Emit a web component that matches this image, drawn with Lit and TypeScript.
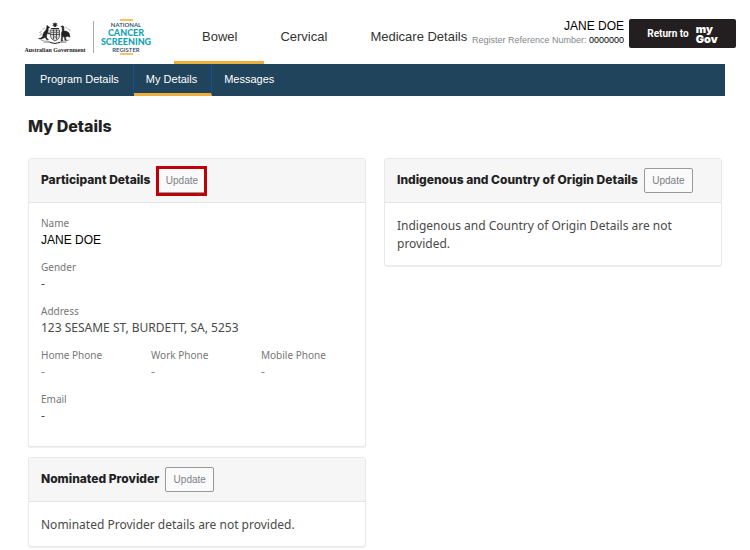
import { LitElement, html, css, svg, nothing } from "lit";
import { customElement, property } from "lit/decorators.js";
import { classMap } from "lit/directives/class-map.js";

const crest = svg`
  <g fill="none" stroke="#222" stroke-linecap="round" stroke-linejoin="round">
    <path fill="#222" stroke="none" d="M17 0l.7 1.6 1.7-.5-.9 1.5 1.4 1-1.8.2.1 1.7L17 4.400l-1.200 1.100.1-1.700-1.800-.2 1.400-1-.9-1.500 1.700.5z"/>
    <path stroke-width="1.200" d="M13.500 6.500h7"/>
    <path fill="#ddd" stroke-width=".7" d="M12.500 8h9v6c0 2.500-2.500 4-4.500 5-2-1-4.500-2.500-4.500-5z"/>
    <path stroke-width=".7" d="M12.500 12.500h9M15.500 8v9M18.500 8v9M13.500 10.300h1M16.500 10.300h1M19.500 10.300h1M16.500 15h1"/>
    <path fill="#222" stroke-width=".5" d="M9.500 3.500l1 1.200 1.400.8-1.700.7c.2 1.700.1 2.900-.6 4.300l2.200.8-.2.700-2.500-.4c-.5 2-.8 3.200-.2 4.500l1.600 1.700H8.700l-1.600-2.500-2.300 1.200c-1.800.7-3 .7-4.300 0 1.800-.1 3.300-.8 4.100-2.300.4-3 1.800-4.700 3.300-6.200.7-1.200.9-2.700 1-4z"/>
    <path fill="#222" stroke-width=".5" d="M23 4.500l1.700-.7 1 .8c.5 1.500 0 3.200.3 4.500 2.800-.4 5.200 1.200 5.700 4l.3 2.200-2-1-2.700.6.700 2.500 1 1h-2l-.7-3.300-1.500-.7-.5 3.500.5 1h-1.700l.5-4.600c-.8-2.300.1-4 .7-5.600-.2-1.200-.1-2.300-.1-3.500z"/>
    <path stroke="#777" stroke-width=".7" d="M3 18c3 2 6 .5 9 1.700M31 18c-3 2-6 .5-9 1.700M6 20.500c3-1 5 .5 7 .2M28 20.500c-3-1-5 .5-7 .2M1.500 11l2-2M2 13.500l1.500-2M32 9l-1.500-2M5 7.500L6.500 6M29 6.500L27.500 5"/>
    <path stroke-width="1" d="M12.500 20.500l4.500 1 4.500-1"/>
  </g>`;

const sheet = css`
  * { box-sizing: border-box; }
  h1, h2, p, dl, dd, dt { margin: 0; }
  a { color: inherit; text-decoration: none; }
`;

@customElement("detail-card")
class DetailCard extends LitElement {
  @property() heading = "";
  @property({ type: Boolean }) marked = false;

  static styles = [sheet, css`
    :host { display: block; }
    .card {
      border: 1px solid #e9e9e9;
      border-radius: 3px;
      box-shadow: 0 1px 1px #eee;
      background: #fff;
    }
    .head {
      display: flex;
      align-items: center;
      gap: 6px;
      height: 44px;
      padding: 0 12px;
      background: #f6f6f6;
      border-bottom: 1px solid #e4e4e4;
    }
    h2 {
      font: 800 12px/18px Inter, "Liberation Sans", sans-serif;
      padding-bottom: 2px;
      color: #222;
      white-space: nowrap;
    }
    button {
      flex: none;
      width: 49px;
      height: 25px;
      padding: 0;
      border: 1px solid #96999d;
      border-radius: 2px;
      background: #fafafa;
      color: #7c8086;
      font: 10px/14px "Liberation Sans", Arial, sans-serif;
    }
    .marked {
      width: 51px;
      height: 30px;
      border: 3px solid #c00008;
      border-radius: 0;
      box-shadow: inset 0 -1px #96999d;
    }
    .body { padding: 13px 12px 10px; }
  `];

  render() {
    return html`
      <section class="card">
        <div class="head">
          <h2>${this.heading}</h2>
          <button type="button" class=${classMap({ marked: this.marked })} aria-label="Update ${this.heading}">Update</button>
        </div>
        <div class="body"><slot></slot></div>
      </section>`;
  }
}

@customElement("app-root")
class AppRoot extends LitElement {
  static styles = [sheet, css`
    :host {
      display: block;
      background: #fff;
      color: #4a4a4a;
      font: 12px/18px "Noto Sans", "Open Sans", sans-serif;
    }
    .top {
      display: flex;
      height: 64px;
      padding: 0 14px 0 25px;
      font-family: "Liberation Sans", Arial, sans-serif;
    }
    .brand { display: flex; width: 149px; padding-top: 19px; flex: none; }
    .gov {
      display: flex;
      flex-direction: column;
      align-items: center;
      width: 60px;
      padding-top: 3px;
      font: bold 6px/8px "Liberation Serif", serif;
      color: #222;
      white-space: nowrap;
    }
    .gov svg { display: block; margin-bottom: 2px; }
    .rule { width: 1px; height: 32px; margin: 2px 7px 0 8px; background: #aaa; }
    .ncsr {
      display: flex;
      flex-direction: column;
      align-items: center;
      width: 50px;
      height: 36px;
      padding: 2px 0;
      font: 600 6px/7px Lato, sans-serif;
      color: #1c4660;
      background:
        linear-gradient(#f5c26b, #f5c26b) top / 13px 2px no-repeat,
        linear-gradient(#f5c26b, #f5c26b) bottom / 13px 2px no-repeat;
    }
    .ncsr b { font-weight: 900; font-size: 9px; line-height: 9px; color: #16a3b4; }
    .tabs { display: flex; flex: none; }
    .tabs a {
      display: flex;
      align-items: center;
      padding: 12px 27px 0 16px;
      border-bottom: 3px solid transparent;
      font-size: 13px;
      line-height: 16px;
      color: #333;
      white-space: nowrap;
    }
    .tabs a:first-child { padding-left: 28px; }
    .tabs a:last-child { padding-right: 0; }
    .tabs .on { border-color: #edae3c; }
    .who {
      margin-left: auto;
      padding-top: 19px;
      font-size: 9px;
      line-height: 14px;
      text-align: right;
      color: #000;
      white-space: nowrap;
    }
    .who strong { display: block; font-weight: 400; font-size: 12px; }
    .who span { color: #84878b; }
    .back {
      display: flex;
      align-items: center;
      justify-content: center;
      gap: 7px;
      flex: none;
      width: 107px;
      height: 29px;
      margin: 19px 0 0 5px;
      padding: 0;
      border: 0;
      border-radius: 2px;
      background: #231f20;
      color: #fff;
      font: 700 10px/14px Roboto, sans-serif;
    }
    .back b { font: 900 11px/10px Inter, sans-serif; text-align: left; }
    .sub {
      display: flex;
      height: 32px;
      margin: 0 25px;
      background: #20445c;
      font: 11px/14px "Liberation Sans", Arial, sans-serif;
      color: #fff;
    }
    .sub a { padding: 8px 14px 7px 12px; border-right: 1px solid #17508a; border-bottom: 3px solid transparent; }
    .sub a:first-child { padding-left: 15px; }
    .sub a:last-child { border-right: 0; }
    .sub .on { border-bottom-color: #edae3c; }
    main { padding: 18px 28px 3px; }
    h1 { font: 800 16px/24px Inter, sans-serif; color: #222; margin-bottom: 20px; }
    .cols {
      display: grid;
      grid-template-columns: 1fr 1fr;
      gap: 18px;
      align-items: start;
    }
    .stack { display: grid; gap: 10px; }
    p { padding: 1px 0 2px; }
    dl div { padding-bottom: 10px; }
    dt { font-size: 10px; line-height: 14px; color: #777; }
    dd { line-height: 20px; }
    .plain { font-family: "Liberation Sans", Arial, sans-serif; color: #000; }
    .phones { display: grid; grid-template-columns: 1fr 1fr 92px; }
    .phones dd { color: #888; }
  `];

  field(label: string, value = "-", plain = false) {
    return html`<div><dt>${label}</dt><dd class=${plain ? "plain" : nothing}>${value}</dd></div>`;
  }

  render() {
    return html`
      <header class="top">
        <div class="brand">
          <div class="gov">
            <svg width="34" height="22" viewBox="0 0 34 22" aria-hidden="true">${crest}</svg>
            Australian Government
          </div>
          <div class="rule"></div>
          <div class="ncsr"><span>NATIONAL</span><b>CANCER</b><b>SCREENING</b><span>REGISTER</span></div>
        </div>
        <nav class="tabs" aria-label="Program">
          <a href="#bowel" class="on" aria-current="page">Bowel</a>
          <a href="#cervical">Cervical</a>
          <a href="#medicare">Medicare Details</a>
        </nav>
        <div class="who">
          <strong>JANE DOE</strong>
          <span>Register Reference Number:</span> 0000000
        </div>
        <button type="button" class="back">Return to <b>my<br>Gov</b></button>
      </header>
      <nav class="sub" aria-label="Section">
        <a href="#program">Program Details</a>
        <a href="#details" class="on" aria-current="page">My Details</a>
        <a href="#messages">Messages</a>
      </nav>
      <main>
        <h1>My Details</h1>
        <div class="cols">
          <div class="stack">
            <detail-card heading="Participant Details" marked>
              <dl>
                ${this.field("Name", "JANE DOE", true)}
                ${this.field("Gender")}
                ${this.field("Address", "123 SESAME ST, BURDETT, SA, 5253")}
              </dl>
              <dl class="phones">
                ${this.field("Home Phone")}
                ${this.field("Work Phone")}
                ${this.field("Mobile Phone")}
              </dl>
              <dl>${this.field("Email")}</dl>
            </detail-card>
            <detail-card heading="Nominated Provider">
              <p>Nominated Provider details are not provided.</p>
            </detail-card>
          </div>
          <detail-card heading="Indigenous and Country of Origin Details">
            <p>Indigenous and Country of Origin Details are not provided.</p>
          </detail-card>
        </div>
      </main>`;
  }
}
